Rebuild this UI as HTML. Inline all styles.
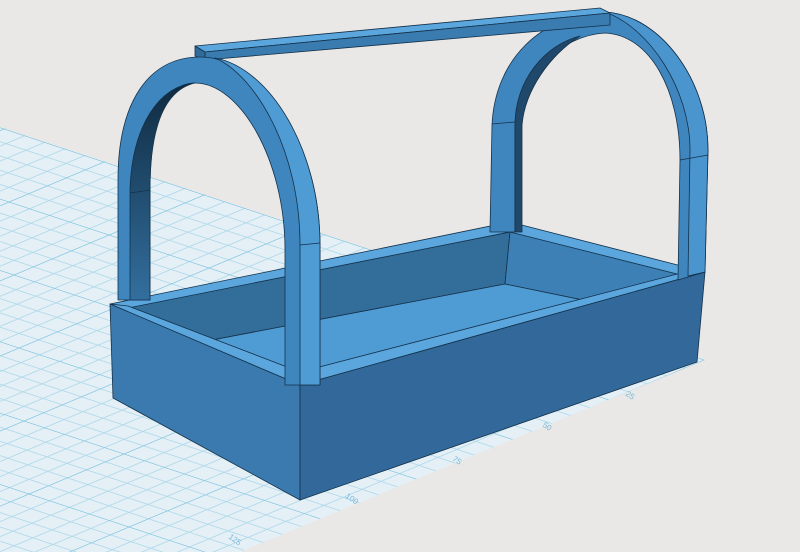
<!DOCTYPE html>
<html><head><meta charset="utf-8"><style>
html,body{margin:0;padding:0;background:#e9e8e6;}
svg{display:block;}
</style></head><body>
<svg width="800" height="552" viewBox="0 0 800 552" xmlns="http://www.w3.org/2000/svg">
<defs>
<pattern id="g" width="50" height="50" patternUnits="userSpaceOnUse" patternTransform="matrix(-2.0,-0.66,-1.9,0.8,705,360)">
<rect width="50" height="50" fill="#e4f0f6"/>
<path d="M10 0V50M20 0V50M30 0V50M40 0V50M0 10H50M0 20H50M0 30H50M0 40H50" stroke="#afd8ea" stroke-width="0.6" fill="none"/>
<path d="M0 0V50M0 0H50" stroke="#80c3df" stroke-width="1" fill="none"/>
</pattern>
<linearGradient id="dk" x1="0" y1="0" x2="0" y2="1">
<stop offset="0" stop-color="#0f2a40"/><stop offset="1" stop-color="#336f9e"/>
</linearGradient>
</defs>
<rect width="800" height="552" fill="#e9e8e6"/>
<polygon points="0,127 705,360 240,552 0,552" fill="url(#g)"/>
<g font-family="Liberation Sans, sans-serif" font-size="8" fill="#7ab8d6">
<text transform="translate(345,497) rotate(35)">100</text>
<text transform="translate(228,538) rotate(35)">125</text>
<text transform="translate(452,460) rotate(35)">75</text>
<text transform="translate(542,426) rotate(35)">50</text>
<text transform="translate(625,395) rotate(35)">25</text>
</g>
<g stroke="#14314a" stroke-width="0.8" stroke-linejoin="round">
<polygon points="128,306 510,232 505,284 160,350" fill="#336e9b"/>
<polygon points="510,232 685,272 690,322 505,284" fill="#3d80b5"/>
<polygon points="160,350 505,284 690,322 300,378" fill="#4f9bd3"/>
<polygon points="110,304 510,222 510,232 128,308" fill="#5aa6dd"/>
<polygon points="510,222 705,272 685,276 510,232" fill="#5aa6dd"/>
<polygon points="110,304 128,306 300,372 300,385" fill="#5aa6dd"/>
<polygon points="300,372 685,272 705,272 300,385" fill="#5aa6dd"/>
<polygon points="110,304 300,385 300,500 113,398" fill="#3a7aae"/>
<polygon points="300,385 705,272 697,362 300,500" fill="#32699a"/>
<path d="M490,232 L492,125 C495,60 540,15 605,12 C660,15 708,80 708,150 L705,272 L678,280 L680,160 C680,90 650,35 605,33 C560,35 515,80 515,125 L515,232 Z" fill="#3f86be"/>
<path d="M515,232 L515,125 C515,80 545,45 580,36 C550,55 525,90 522,125 L522,232 Z" fill="#20486a"/>
<path d="M605,12 C660,15 708,80 708,150 L705,272 L688,276 L690,150 C690,90 650,28 605,12 Z" fill="#4b95cf"/>
<polygon points="195,46 600,8 610,13 205,52" fill="#5aa6dd"/>
<polygon points="205,52 610,13 610,25 205,60" fill="#3a7cb0"/>
<polygon points="195,46 205,52 205,60 195,56" fill="#2f6a98"/>
<path d="M118,300 L118,180 C118,100 150,57 200,57 C260,57 320,140 320,245 L320,385 L285,385 L285,250 C285,160 240,83 195,83 C165,83 150,120 150,190 L150,300 Z" fill="#3f86be"/>
<path d="M130,300 L130,190 C132,125 160,85 195,83 C165,90 150,125 150,190 L150,300 Z" fill="url(#dk)"/>
<path d="M215,58 C270,68 320,150 320,245 L320,385 L300,385 L300,245 C300,150 255,75 215,58 Z" fill="#4f9bd4"/>
<line x1="130" y1="193" x2="150" y2="190" />
<line x1="300" y1="245" x2="320" y2="243" />
<line x1="680" y1="160" x2="708" y2="155" />
<line x1="492" y1="124" x2="515" y2="122" />
</g>
</svg>
</body></html>
